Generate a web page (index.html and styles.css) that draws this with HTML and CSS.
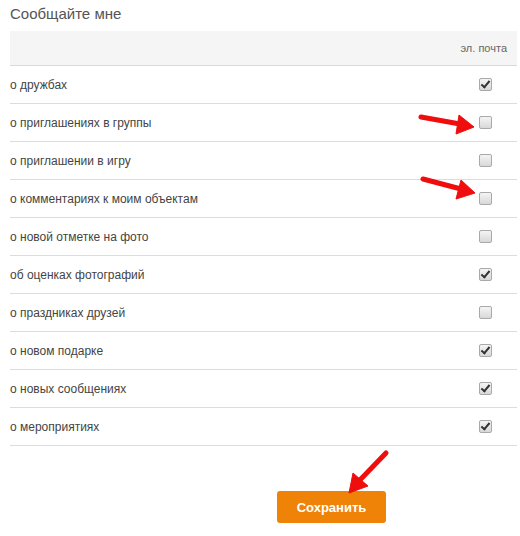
FILE: index.html
```html
<!DOCTYPE html>
<html lang="ru">
  <head>
    <meta charset="UTF-8" />
    <title>Сообщайте мне</title>
    <link rel="stylesheet" href="styles.css">
  </head>
  <body>
    <div class="page">
      <h2 class="title">Сообщайте мне</h2>
      <div class="head-row">эл. почта</div>
      <ul class="list">
        <li class="row"><span>о дружбах</span><i class="box on"></i></li>
        <li class="row"><span>о приглашениях в группы</span><i class="box"></i></li>
        <li class="row"><span>о приглашении в игру</span><i class="box"></i></li>
        <li class="row"><span>о комментариях к моим объектам</span><i class="box"></i></li>
        <li class="row"><span>о новой отметке на фото</span><i class="box"></i></li>
        <li class="row"><span>об оценках фотографий</span><i class="box on"></i></li>
        <li class="row"><span>о праздниках друзей</span><i class="box"></i></li>
        <li class="row"><span>о новом подарке</span><i class="box on"></i></li>
        <li class="row"><span>о новых сообщениях</span><i class="box on"></i></li>
        <li class="row"><span>о мероприятиях</span><i class="box on"></i></li>
      </ul>
      <div class="actions">
        <button class="save">Сохранить</button>
      </div>

      <!-- стрелки поверх страницы -->
      <svg class="arrows" width="520" height="536" viewBox="0 0 520 536">
        <g fill="#f00d0d" stroke="#f00d0d" stroke-linejoin="round">
          <line x1="421" y1="117" x2="460" y2="124" stroke-width="5" stroke-linecap="round" />
          <polygon points="474,127 456,134 459,115" />
          <line x1="423" y1="179" x2="461" y2="189" stroke-width="5" stroke-linecap="round" />
          <polygon points="475,193 456,199 461,180" />
          <line x1="386" y1="453" x2="359" y2="481" stroke-width="5" stroke-linecap="round" />
          <polygon points="349,493 353,473 368,486" />
        </g>
      </svg>
    </div>
  </body>
</html>
```

FILE: styles.css
```css
body {
  margin: 0;
  font-family: Arial, "Liberation Sans", sans-serif;
  color: #333;
  background: #fff;
}
.page {
  position: relative;
  width: 520px;
  height: 536px;
  padding: 0 3px 0 10px;
  box-sizing: border-box;
}
.title {
  margin: 0;
  padding-top: 5px;
  height: 31px;
  box-sizing: border-box;
  font-size: 15px;
  font-weight: normal;
  color: #555;
}
.head-row {
  height: 34px;
  line-height: 34px;
  background: #f5f5f5;
  border-bottom: 1px solid #d9d9d9;
  text-align: right;
  padding-right: 10px;
  font-size: 11px;
  color: #666;
}
.list {
  list-style: none;
  margin: 0;
  padding: 0;
}
.row {
  display: flex;
  align-items: center;
  justify-content: space-between;
  height: 37px;
  border-bottom: 1px solid #dcdcdc;
  font-size: 12px;
  color: #444;
}
.box {
  position: relative;
  width: 11px;
  height: 11px;
  margin-right: 25px;
  border: 1px solid #a9a9a9;
  border-radius: 2px;
  background: linear-gradient(180deg, #f4f4f4, #d8d8d8);
}
.box.on::after {
  content: "";
  position: absolute;
  left: 3px;
  top: 0;
  width: 3px;
  height: 7px;
  border: solid #333;
  border-width: 0 2px 2px 0;
  transform: rotate(40deg);
}
.actions {
  display: flex;
  padding-top: 45px;
  padding-left: 267px;
}
.save {
  width: 109px;
  height: 32px;
  border: none;
  border-radius: 3px;
  background: #ef8308;
  color: #fff;
  font-family: Arial, "Liberation Sans", sans-serif;
  font-size: 13px;
  font-weight: bold;
  cursor: pointer;
}
.arrows {
  position: absolute;
  left: 0;
  top: 0;
  pointer-events: none;
}
```
